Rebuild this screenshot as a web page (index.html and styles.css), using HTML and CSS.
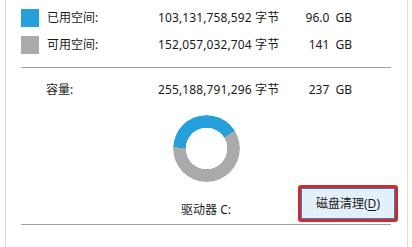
FILE: index.html
```html
<!DOCTYPE html>
<html lang="zh-CN">
<head>
<meta charset="utf-8">
<link rel="stylesheet" href="styles.css">
</head>
<body>
<div class="panel">
  <div class="stats">
    <span class="swatch used"></span>
    <span class="label">已用空间:</span>
    <span class="bytes">103,131,758,592 字节</span>
    <span class="size">96.0 GB</span>

    <span class="swatch free"></span>
    <span class="label">可用空间:</span>
    <span class="bytes">152,057,032,704 字节</span>
    <span class="size">141 GB</span>
  </div>
  <hr class="rule">
  <div class="stats capacity">
    <span class="swatch-empty"></span>
    <span class="label">容量:</span>
    <span class="bytes">255,188,791,296 字节</span>
    <span class="size">237 GB</span>
  </div>
  <div class="donut-wrap"><div class="donut"></div></div>
  <div class="footer">
    <span class="drive">驱动器 C:</span>
    <div class="highlight"><button class="cleanup" type="button">磁盘清理(<u>D</u>)</button></div>
  </div>
  <hr class="rule bottom">
</div>
</body>
</html>
```
FILE: styles.css
```css
html, body {
  margin: 0;
  padding: 0;
  background: #fff;
}
body {
  width: 412px;
  height: 247px;
  overflow: hidden;
  font-family: "Noto Sans", "Noto Sans CJK SC", sans-serif;
  font-size: 12px;
  color: #1a1a1a;
}
.panel {
  box-sizing: border-box;
  margin-left: 5px;
  width: 403px;
  height: 247px;
  border-left: 1px solid #dcdcdc;
  border-right: 1px solid #dcdcdc;
  padding: 4px 16px 0 15px;
}
.stats {
  display: grid;
  grid-template-columns: 26px 111px 136px 58px;
  grid-auto-rows: 27px;
  align-items: center;
}
.swatch {
  width: 18px;
  height: 18px;
}
.used { background: #26a0da; }
.free { background: #aaaaaa; }
.label, .bytes, .size {
  line-height: 16px;
  white-space: nowrap;
}
.bytes { letter-spacing: 0.12px; }
.size {
  text-align: right;
  word-spacing: 3px;
}
.rule {
  border: 0;
  border-top: 1px solid #a0a0a0;
  margin: 9px 0 0 0;
  height: 0;
}
.capacity {
  margin-top: 9px;
  grid-auto-rows: 26px;
}
.capacity .label { margin-left: -1px; }
.donut-wrap {
  display: flex;
  justify-content: center;
  margin-top: 12px;
}
.donut {
  width: 67px;
  height: 67px;
  border-radius: 50%;
  background: conic-gradient(from -88deg, #26a0da 0 146deg, #aaaaaa 146deg 360deg);
  -webkit-mask: radial-gradient(circle, transparent 20.5px, #000 21px);
  mask: radial-gradient(circle, transparent 20.5px, #000 21px);
}
.footer {
  display: grid;
  grid-template-columns: 1fr auto 1fr;
  margin-top: 3px;
  height: 37px;
}
.drive {
  grid-column: 2;
  align-self: end;
  line-height: 16px;
  margin-bottom: 4px;
}
.highlight {
  grid-column: 3;
  justify-self: end;
  margin-right: -7px;
  box-sizing: border-box;
  width: 100px;
  height: 37px;
  border: 3px solid #cf2b2b;
  border-radius: 3px;
  display: flex;
}
.cleanup {
  flex: 1;
  margin: 0;
  padding: 0;
  border: 1px solid #2f7fcf;
  background: #e3eff9;
  font-family: inherit;
  font-size: 12px;
  color: #1a1a1a;
  line-height: 16px;
}
.cleanup u { text-underline-offset: 2px; }
.bottom {
  margin-top: 2px;
}
```
